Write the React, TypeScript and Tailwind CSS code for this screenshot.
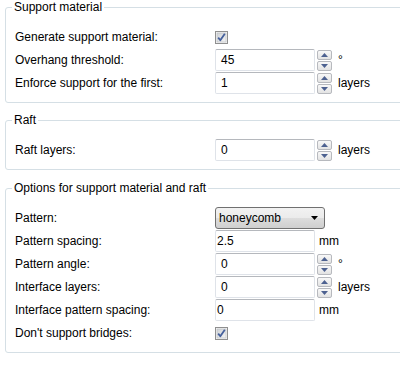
import React from "react";

function SpinBtn({ up }: { up?: boolean }) {
  return (
    <div className="flex h-[10px] w-[15px] items-center justify-center rounded-[2px] border border-[#b7b9be] bg-[linear-gradient(#f8f8f8,#e3e3e3)]">
      <svg width="7" height="4" viewBox="0 0 7 4">
        <path d={up ? "M0 4 L3.5 0 L7 4Z" : "M0 0 L3.5 4 L7 0Z"} fill="#4d6190" />
      </svg>
    </div>
  );
}

function Spin() {
  return (
    <div className="ml-[2px] flex flex-col gap-px">
      <SpinBtn up />
      <SpinBtn />
    </div>
  );
}

function TextBox({ value, pl = "pl-[5px]" }: { value: string; pl?: string }) {
  return (
    <div
      className={`flex h-[22px] w-[100px] items-center rounded-[2px] border border-[#dfe3e9] border-t-[#b5b8bd] bg-white ${pl}`}
    >
      {value}
    </div>
  );
}

function Check() {
  return (
    <svg width="13" height="13" viewBox="0 0 13 13" className="block">
      <defs>
        <linearGradient id="cbg" x1="0" y1="0" x2="1" y2="1">
          <stop offset="0" stopColor="#cfd2d6" />
          <stop offset="1" stopColor="#f4f4f4" />
        </linearGradient>
      </defs>
      <rect x="0.5" y="0.5" width="12" height="12" fill="#f4f4f4" stroke="#8f8f8f" />
      <rect x="2" y="2" width="9" height="9" fill="url(#cbg)" stroke="#b9bcc0" strokeWidth="0.6" />
      <path d="M3.2 6.6 L5.3 9.2 L9.8 2.8" fill="none" stroke="#45609c" strokeWidth="1.8" strokeLinejoin="round" />
    </svg>
  );
}

function Combo() {
  return (
    <div className="flex h-[22px] w-[110px] items-center justify-between rounded-[3px] border border-[#707070] bg-[linear-gradient(#f2f2f2_0%,#ebebeb_50%,#dddddd_50%,#cfcfcf_100%)] pl-[3px] pr-[6px]">
      <span>honeycomb</span>
      <svg width="7" height="4" viewBox="0 0 7 4">
        <path d="M0 0 L3.5 4 L7 0Z" fill="#000" />
      </svg>
    </div>
  );
}

function Row({ label, children }: { label: string; children: React.ReactNode }) {
  return (
    <div className="flex h-[22px] items-center">
      <div className="w-[200px] shrink-0">{label}</div>
      {children}
    </div>
  );
}

function Unit({ text, spin }: { text: string; spin?: boolean }) {
  return <span className={spin ? "ml-[6px]" : "ml-[4px]"}>{text}</span>;
}

function Group({ title, children, mt }: { title: string; children: React.ReactNode; mt?: string }) {
  return (
    <fieldset
      className={`mr-[-4px] rounded-[3px] border border-[#d5dfe5] pb-[8px] pl-[9px] pt-[12px] ${mt ?? ""}`}
    >
      <legend className="ml-[-3px] px-[2px] leading-[14px]">{title}</legend>
      <div className="flex flex-col gap-px">{children}</div>
    </fieldset>
  );
}

export default function App() {
  return (
    <div className="h-[385px] w-[400px] overflow-hidden bg-white pl-[5px] font-['Liberation_Sans',Arial,sans-serif] text-[12px] text-black">
      <Group title="Support material">
        <Row label="Generate support material:">
          <Check />
        </Row>
        <Row label="Overhang threshold:">
          <TextBox value="45" />
          <Spin />
          <Unit text="°" spin />
        </Row>
        <Row label="Enforce support for the first:">
          <TextBox value="1" />
          <Spin />
          <Unit text="layers" spin />
        </Row>
      </Group>
      <Group title="Raft" mt="mt-[10px]">
        <Row label="Raft layers:">
          <TextBox value="0" />
          <Spin />
          <Unit text="layers" spin />
        </Row>
      </Group>
      <Group title="Options for support material and raft" mt="mt-[11px]">
        <Row label="Pattern:">
          <Combo />
        </Row>
        <Row label="Pattern spacing:">
          <TextBox value="2.5" pl="pl-[1px]" />
          <Unit text="mm" />
        </Row>
        <Row label="Pattern angle:">
          <TextBox value="0" />
          <Spin />
          <Unit text="°" spin />
        </Row>
        <Row label="Interface layers:">
          <TextBox value="0" />
          <Spin />
          <Unit text="layers" spin />
        </Row>
        <Row label="Interface pattern spacing:">
          <TextBox value="0" pl="pl-[1px]" />
          <Unit text="mm" />
        </Row>
        <Row label="Don't support bridges:">
          <Check />
        </Row>
      </Group>
    </div>
  );
}
